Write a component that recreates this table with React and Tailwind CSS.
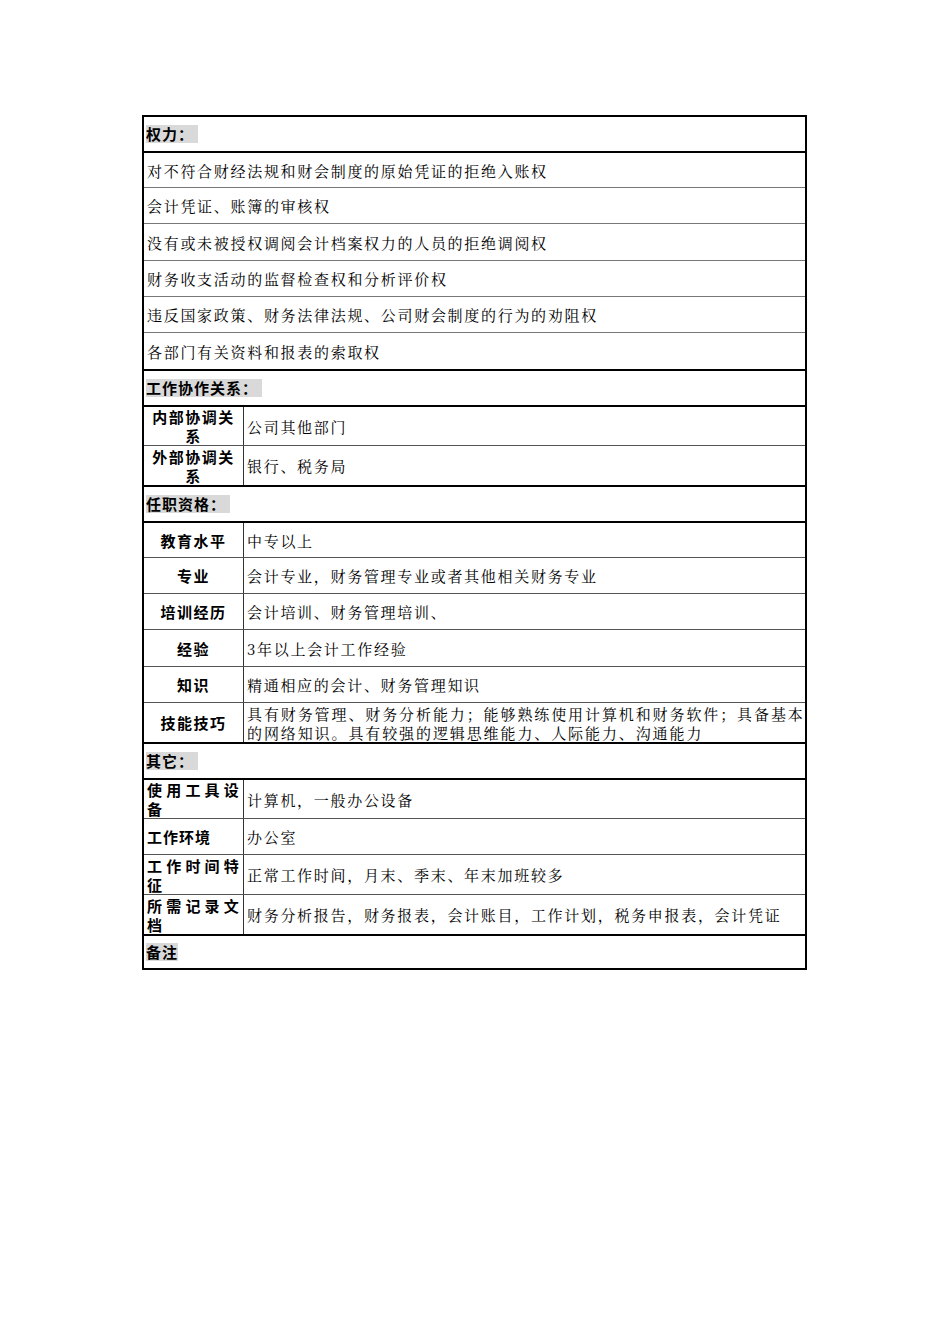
const body = { fontFamily: '"Noto Serif CJK SC", "Noto Sans CJK SC", serif' }
const bold = { fontFamily: '"Noto Sans CJK SC", sans-serif' }

const sections = [
  {
    title: '权力：',
    rows: [
      { h: 'h-[36px]', text: '对不符合财经法规和财会制度的原始凭证的拒绝入账权' },
      { h: 'h-[36px]', text: '会计凭证、账簿的审核权' },
      { h: 'h-[37px]', text: '没有或未被授权调阅会计档案权力的人员的拒绝调阅权' },
      { h: 'h-[36px]', text: '财务收支活动的监督检查权和分析评价权' },
      { h: 'h-[36px]', text: '违反国家政策、财务法律法规、公司财会制度的行为的劝阻权' },
      { h: 'h-[37px]', text: '各部门有关资料和报表的索取权' },
    ],
  },
  {
    title: '工作协作关系：',
    rows: [
      { h: 'h-[40px]', label: '内部协调关系', align: 'center', text: '公司其他部门' },
      { h: 'h-[40px]', label: '外部协调关系', align: 'center', text: '银行、税务局' },
    ],
  },
  {
    title: '任职资格：',
    rows: [
      { h: 'h-[36px]', label: '教育水平', align: 'center', text: '中专以上' },
      { h: 'h-[36px]', label: '专业', align: 'center', text: '会计专业，财务管理专业或者其他相关财务专业' },
      { h: 'h-[36px]', label: '培训经历', align: 'center', text: '会计培训、财务管理培训、' },
      { h: 'h-[37px]', label: '经验', align: 'center', text: '3年以上会计工作经验' },
      { h: 'h-[36px]', label: '知识', align: 'center', text: '精通相应的会计、财务管理知识' },
      {
        h: 'h-[40px]',
        label: '技能技巧',
        align: 'center',
        wide: true,
        lines: ['具有财务管理、财务分析能力；能够熟练使用计算机和财务软件；具备基本', '的网络知识。具有较强的逻辑思维能力、人际能力、沟通能力'],
      },
    ],
  },
  {
    title: '其它：',
    rows: [
      { h: 'h-[40px]', label: '使用工具设备', align: 'spread', text: '计算机，一般办公设备' },
      { h: 'h-[36px]', label: '工作环境', align: 'left', text: '办公室' },
      { h: 'h-[40px]', label: '工作时间特征', align: 'spread', text: '正常工作时间，月末、季末、年末加班较多' },
      { h: 'h-[40px]', label: '所需记录文档', align: 'spread', text: '财务分析报告，财务报表，会计账目，工作计划，税务申报表，会计凭证' },
    ],
  },
]

function Header({ title, first }) {
  return (
    <div
      className={`flex items-center pl-[2px] ${first ? 'h-[34px]' : 'h-[36px] border-t-2 border-black'}`}
    >
      <span className="bg-[#d9d9d9] pr-[4px] text-[15px] font-bold leading-[18px] tracking-[1px] text-black" style={bold}>
        {title}
      </span>
    </div>
  )
}

function Label({ label, align }) {
  const cls =
    align === 'center'
      ? 'text-center tracking-[1.5px] px-[4px]'
      : align === 'spread'
        ? 'text-left tracking-[4.2px] pl-[3px] break-all'
        : 'text-left tracking-[1px] pl-[3px]'
  return (
    <div className="flex h-full w-[100px] shrink-0 items-center border-r border-[#333]">
      <div className={`w-full text-[15px] font-bold leading-[19px] text-black ${cls}`} style={bold}>
        {label}
      </div>
    </div>
  )
}

function Row({ row, topCls }) {
  return (
    <div className={`flex items-center ${row.h} ${topCls}`}>
      {row.label && <Label label={row.label} align={row.align} />}
      <div
        className={`flex-1 pl-[3px] text-[15px] leading-[19px] whitespace-nowrap text-black ${row.wide ? 'tracking-[1.9px]' : 'tracking-[1.7px]'}`}
        style={body}
      >
        {row.lines ? row.lines.map((l) => <div key={l}>{l}</div>) : row.text}
      </div>
    </div>
  )
}

export default function App() {
  return (
    <div className="min-h-[1344px] w-[950px] bg-white pt-[115px]">
      <div className="ml-[142px] w-[665px] border-2 border-black">
        {sections.map((s, si) => (
          <div key={s.title}>
            <Header title={s.title} first={si === 0} />
            {s.rows.map((r, ri) => (
              <Row
                key={ri}
                row={r}
                topCls={ri === 0 ? 'border-t-2 border-black' : r.label ? 'border-t border-[#555]' : 'border-t border-[#777]'}
              />
            ))}
          </div>
        ))}
        <div className="flex h-[34px] items-center border-t-2 border-black pl-[2px]">
          <span className="bg-[#d9d9d9] text-[15px] font-bold leading-[18px] tracking-[1px] text-black" style={bold}>
            备注
          </span>
        </div>
      </div>
    </div>
  )
}
